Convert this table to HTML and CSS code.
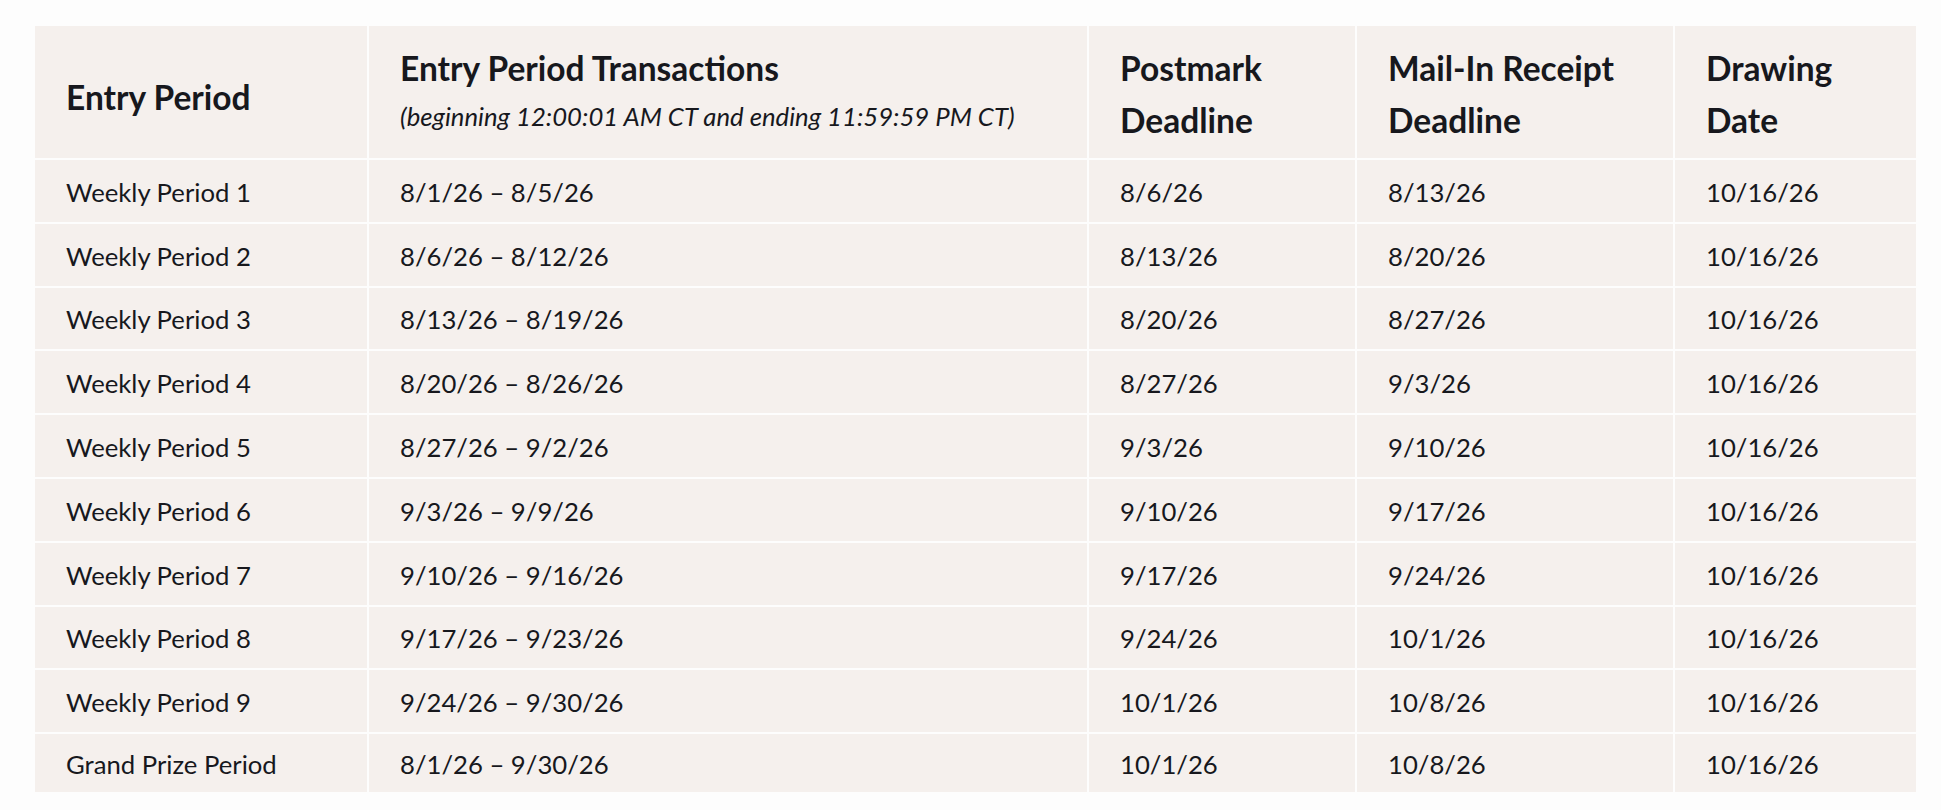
FILE: index.html
```html
<!DOCTYPE html>
<html lang="en">
<head>
<meta charset="utf-8">
<title>Entry Periods</title>
<link rel="stylesheet" href="styles.css">
</head>
<body>
<div class="schedule">
  <div class="cell head single"><div>Entry Period</div></div>
  <div class="cell head top"><div><div class="title">Entry Period Transactions</div><div class="sub">(beginning 12:00:01 AM CT and ending 11:59:59 PM CT)</div></div></div>
  <div class="cell head"><div>Postmark<br>Deadline</div></div>
  <div class="cell head"><div>Mail-In Receipt<br>Deadline</div></div>
  <div class="cell head"><div>Drawing<br>Date</div></div>

  <div class="cell">Weekly Period 1</div><div class="cell">8/1/26 – 8/5/26</div><div class="cell">8/6/26</div><div class="cell">8/13/26</div><div class="cell">10/16/26</div>
  <div class="cell">Weekly Period 2</div><div class="cell">8/6/26 – 8/12/26</div><div class="cell">8/13/26</div><div class="cell">8/20/26</div><div class="cell">10/16/26</div>
  <div class="cell">Weekly Period 3</div><div class="cell">8/13/26 – 8/19/26</div><div class="cell">8/20/26</div><div class="cell">8/27/26</div><div class="cell">10/16/26</div>
  <div class="cell">Weekly Period 4</div><div class="cell">8/20/26 – 8/26/26</div><div class="cell">8/27/26</div><div class="cell">9/3/26</div><div class="cell">10/16/26</div>
  <div class="cell">Weekly Period 5</div><div class="cell">8/27/26 – 9/2/26</div><div class="cell">9/3/26</div><div class="cell">9/10/26</div><div class="cell">10/16/26</div>
  <div class="cell">Weekly Period 6</div><div class="cell">9/3/26 – 9/9/26</div><div class="cell">9/10/26</div><div class="cell">9/17/26</div><div class="cell">10/16/26</div>
  <div class="cell">Weekly Period 7</div><div class="cell">9/10/26 – 9/16/26</div><div class="cell">9/17/26</div><div class="cell">9/24/26</div><div class="cell">10/16/26</div>
  <div class="cell">Weekly Period 8</div><div class="cell">9/17/26 – 9/23/26</div><div class="cell">9/24/26</div><div class="cell">10/1/26</div><div class="cell">10/16/26</div>
  <div class="cell">Weekly Period 9</div><div class="cell">9/24/26 – 9/30/26</div><div class="cell">10/1/26</div><div class="cell">10/8/26</div><div class="cell">10/16/26</div>
  <div class="cell">Grand Prize Period</div><div class="cell">8/1/26 – 9/30/26</div><div class="cell">10/1/26</div><div class="cell">10/8/26</div><div class="cell">10/16/26</div>
</div>
</body>
</html>
```
FILE: styles.css
```css
html, body {
  margin: 0;
  background: #fdfdfd;
}
body {
  padding: 26px 0 0 35px;
  font-family: "Lato", "Liberation Sans", sans-serif;
  color: #17181d;
}
.schedule {
  display: grid;
  grid-template-columns: 332px 718px 266px 316px 241px;
  grid-template-rows: 132px repeat(9, 61.8px) 58px;
  gap: 2px;
  width: max-content;
}
.cell {
  background: #f5f0ed;
  padding: 2px 20px 0 31px;
  display: flex;
  align-items: center;
  font-size: 25.7px;
  line-height: 30px;
  white-space: nowrap;
}
.head {
  padding-top: 16px;
  padding-bottom: 12px;
  align-items: flex-start;
  font-weight: 700;
  font-size: 33.5px;
  line-height: 52px;
}
.head.single {
  align-items: center;
  padding-top: 20px;
  padding-bottom: 10px;
}
.title {
  line-height: 52px;
}
.sub {
  font-weight: 400;
  font-style: italic;
  font-size: 25.7px;
  line-height: 44px;
}
```
